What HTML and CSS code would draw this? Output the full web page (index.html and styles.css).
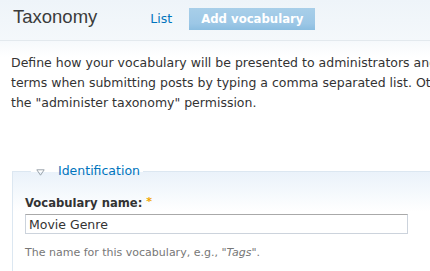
FILE: index.html
```html
<!DOCTYPE html>
<html>
<head>
<meta charset="utf-8">
<title>Taxonomy</title>
<link rel="stylesheet" href="styles.css">
</head>
<body>
<div class="header">
  <h1 class="title">Taxonomy</h1>
  <ul class="tabs">
    <li><a class="tab" href="#">List</a></li>
    <li><a class="tab active" href="#">Add vocabulary</a></li>
  </ul>
</div>
<div class="content">
  <p class="help">Define how your vocabulary will be presented to administrators and users, and which content types to categorize with it. Tags allows users to create<br>terms when submitting posts by typing a comma separated list. Otherwise terms are chosen from a select list and can only be created by users with<br>the "administer taxonomy" permission.</p>
  <form class="form">
    <fieldset class="group">
      <legend class="legend"><span class="toggle"><svg width="9" height="7" viewBox="0 0 9 7"><path d="M0.8 0.8 H8.2 L4.5 6.2 Z" fill="none" stroke="#9aa3ab" stroke-width="1"/></svg></span><a class="legend-link" href="#">Identification</a></legend>
      <label class="label" for="name">Vocabulary name: <span class="req">*</span></label>
      <input class="text" id="name" type="text" value="Movie Genre">
      <div class="desc">The name for this vocabulary, e.g., <em>"Tags"</em>.</div>
    </fieldset>
  </form>
</div>
</body>
</html>
```
FILE: styles.css
```css
html, body {
  margin: 0;
  padding: 0;
  overflow: hidden;
  background: #fff;
}
body {
  font-family: "DejaVu Sans", Verdana, sans-serif;
  color: #333;
}
.header {
  display: flex;
  align-items: flex-start;
  height: 41px;
  padding: 6px 0 0 13px;
  box-sizing: border-box;
  background: linear-gradient(#eef4f9, #f4f8fb);
  border-bottom: 1px solid #e3e9ee;
}
.title {
  margin: 0 41px 0 0;
  font-family: "Liberation Sans", Arial, sans-serif;
  font-weight: normal;
  font-size: 18.5px;
  line-height: 22px;
  color: #3b3b3b;
}
.tabs {
  display: flex;
  gap: 5px;
  list-style: none;
  margin: 2px 0 0;
  padding: 0;
}
.tab {
  display: block;
  padding: 0 12px;
  height: 22px;
  line-height: 22px;
  font-size: 12.5px;
  color: #0074bd;
  text-decoration: none;
}
.tab.active {
  font-size: 11.7px;
  font-weight: bold;
  color: #fff;
  background: linear-gradient(#a8cfe9, #9cc7e6 70%, #8bbde0);
}
.content {
  padding: 0 0 0 11px;
  background: linear-gradient(#f6f9fc, #fff 16px);
}
.help {
  margin: 0;
  padding-top: 12px;
  font-size: 12.5px;
  line-height: 20px;
  white-space: nowrap;
  color: #333;
}
.form {
  padding-top: 50px;
}
.group {
  width: 640px;
  margin: 0 0 0 1px;
  padding: 0 12px 20px;
  border: 1px solid #dce7f1;
  background: linear-gradient(#eaf2fa, #fff 40px);
}
.legend {
  margin-left: 6px;
  padding: 0 3px 0 5px;
  font-size: 12.5px;
  line-height: 16px;
}
.toggle {
  display: inline-block;
  width: 22px;
}
.toggle svg {
  display: block;
  position: relative;
  top: 1px;
}
.legend-link {
  color: #0074bd;
  text-decoration: none;
}
.label {
  display: block;
  margin-top: 15px;
  font-size: 11.6px;
  font-weight: bold;
  line-height: 15px;
  color: #333;
}
.req {
  color: #f0a500;
  font-size: 11px;
  vertical-align: 2px;
}
.text {
  display: block;
  box-sizing: border-box;
  width: 383px;
  height: 20px;
  margin: 3px 0 0;
  padding: 0 3px;
  border: 1px solid #ccd3dc;
  border-top-color: #a9a9a9;
  font-family: "DejaVu Sans", Verdana, sans-serif;
  font-size: 12.5px;
  color: #333;
  background: #fff;
  outline: none;
}
.desc {
  margin-top: 11px;
  font-size: 11px;
  line-height: 15px;
  color: #777;
}
```
